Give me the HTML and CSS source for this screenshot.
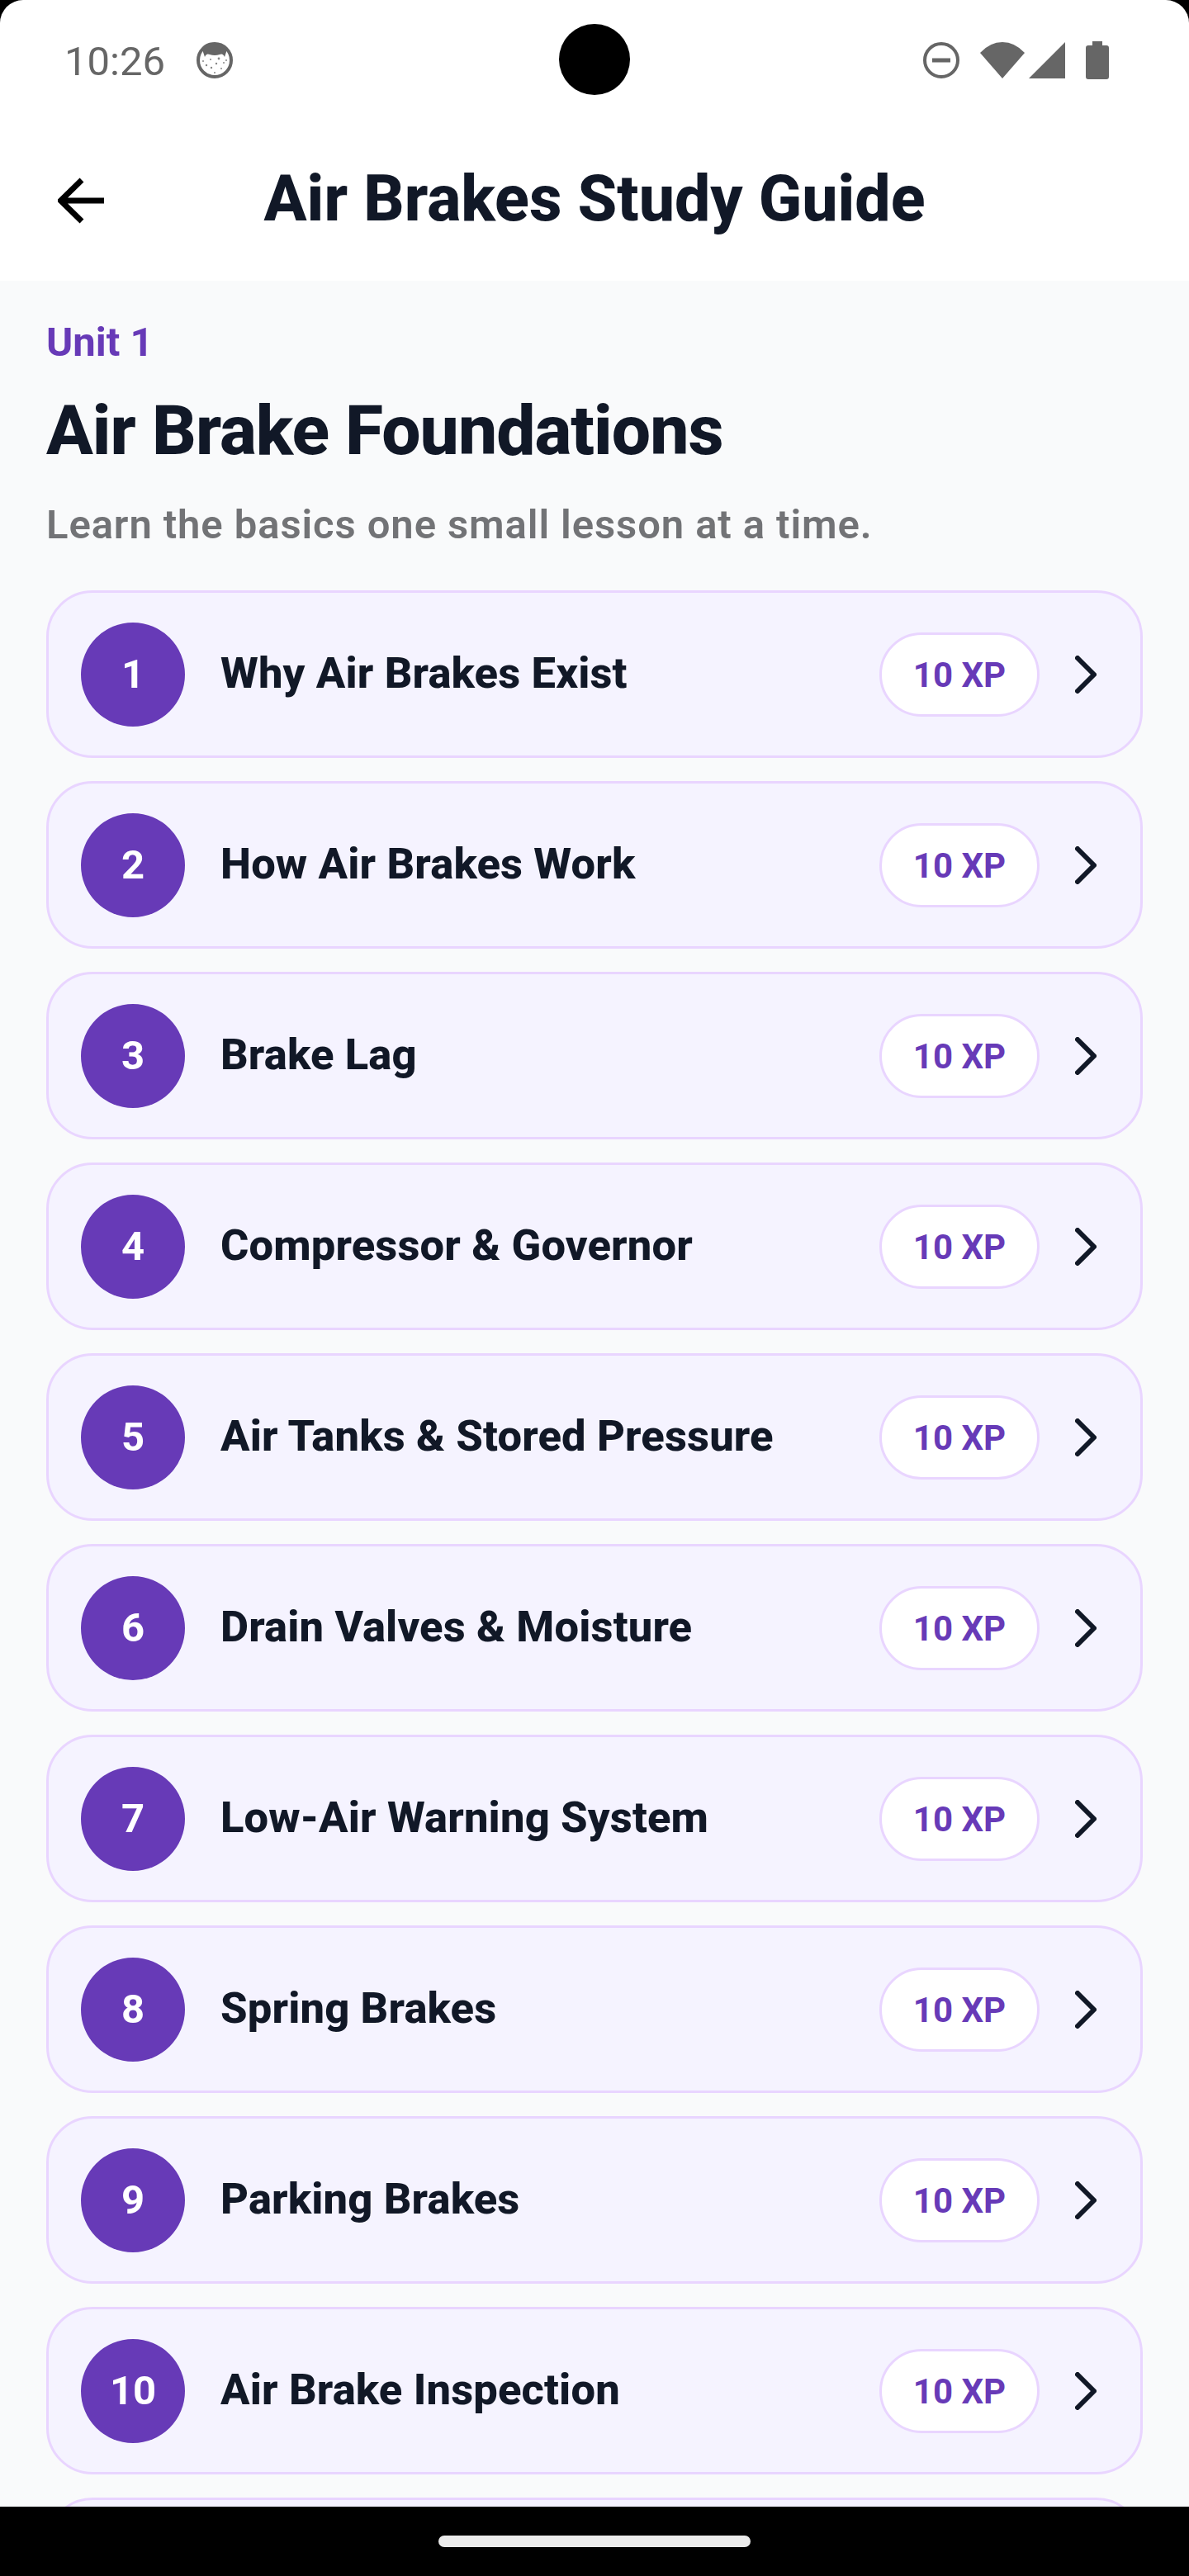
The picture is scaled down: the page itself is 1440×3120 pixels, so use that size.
FILE: index.html
```html
<!DOCTYPE html>
<html lang="en">
<head>
    <meta charset="UTF-8">
    <meta name="viewport" content="width=device-width, initial-scale=1.0">
    <title>Air Brakes Study Guide</title>
    <link rel="stylesheet" href="styles.css">
</head>
<body>
    <div class="screen">
        <div class="camera"></div>

        <div class="status-bar">
            <span class="time">10:26</span>
            <svg class="status-app" width="44" height="44" viewBox="0 0 44 44">
                <circle cx="22" cy="22" r="20" fill="#fff" stroke="#666" stroke-width="4"/>
                <path d="M7 9 L10 18 Q12 13 16 15 Q22 17 28 15 Q32 13 34 18 L37 9 A20 20 0 0 0 7 9 Z" fill="#666"/>
                <g fill="#888">
                    <circle cx="8" cy="23" r="1"/><circle cx="12" cy="28" r="1.2"/><circle cx="17" cy="21" r="1"/>
                    <circle cx="18" cy="31" r="1.2"/><circle cx="24" cy="26" r="1.2"/><circle cx="27" cy="20" r="1.4"/>
                    <circle cx="30" cy="32" r="1"/><circle cx="33" cy="25" r="1"/><circle cx="36" cy="22" r="1"/>
                    <circle cx="22" cy="37" r="1"/>
                </g>
            </svg>
            <svg class="icon-dnd" width="44" height="44" viewBox="0 0 44 44">
                <circle cx="22" cy="22" r="20" fill="none" stroke="#666" stroke-width="4"/>
                <rect x="11" y="19.5" width="22" height="5" fill="#666"/>
            </svg>
            <svg class="icon-wifi" width="54" height="44" viewBox="0 0 54 44">
                <path d="M27 44 L0 13 Q12 0 27 0 Q42 0 54 13 Z" fill="#666"/>
            </svg>
            <svg class="icon-signal" width="44" height="44" viewBox="0 0 44 44">
                <path d="M44 0 V44 H0 Z" fill="#666"/>
            </svg>
            <svg class="icon-battery" width="28" height="46" viewBox="0 0 28 46">
                <path d="M8 0 H20 V5 H25 Q28 5 28 8 V43 Q28 46 25 46 H3 Q0 46 0 43 V8 Q0 5 3 5 H8 Z" fill="#666"/>
            </svg>
        </div>

        <div class="top-bar">
            <div class="back-btn">
                <svg width="56" height="56" viewBox="0 0 56 56">
                    <path d="M56 28 H4 M29 3 L3.5 28 L29 53" fill="none" stroke="#000" stroke-width="7"/>
                </svg>
            </div>
            <h1>Air Brakes Study Guide</h1>
            <div></div>
        </div>

        <div class="content">
            <p class="unit-label">Unit 1</p>
            <h2>Air Brake Foundations</h2>
            <p class="unit-desc">Learn the basics one small lesson at a time.</p>

            <div class="lesson-list">
                <div class="lesson">
                    <div class="lesson-num">1</div>
                    <div class="lesson-name">Why Air Brakes Exist</div>
                    <div class="xp">10 XP</div>
                    <svg class="chevron" width="26" height="46" viewBox="0 0 26 46"><path d="M3 3 L23 23 L3 43" fill="none" stroke="#111827" stroke-width="6" stroke-linecap="round" stroke-linejoin="round"/></svg>
                </div>
                <div class="lesson">
                    <div class="lesson-num">2</div>
                    <div class="lesson-name">How Air Brakes Work</div>
                    <div class="xp">10 XP</div>
                    <svg class="chevron" width="26" height="46" viewBox="0 0 26 46"><path d="M3 3 L23 23 L3 43" fill="none" stroke="#111827" stroke-width="6" stroke-linecap="round" stroke-linejoin="round"/></svg>
                </div>
                <div class="lesson">
                    <div class="lesson-num">3</div>
                    <div class="lesson-name">Brake Lag</div>
                    <div class="xp">10 XP</div>
                    <svg class="chevron" width="26" height="46" viewBox="0 0 26 46"><path d="M3 3 L23 23 L3 43" fill="none" stroke="#111827" stroke-width="6" stroke-linecap="round" stroke-linejoin="round"/></svg>
                </div>
                <div class="lesson">
                    <div class="lesson-num">4</div>
                    <div class="lesson-name">Compressor &amp; Governor</div>
                    <div class="xp">10 XP</div>
                    <svg class="chevron" width="26" height="46" viewBox="0 0 26 46"><path d="M3 3 L23 23 L3 43" fill="none" stroke="#111827" stroke-width="6" stroke-linecap="round" stroke-linejoin="round"/></svg>
                </div>
                <div class="lesson">
                    <div class="lesson-num">5</div>
                    <div class="lesson-name">Air Tanks &amp; Stored Pressure</div>
                    <div class="xp">10 XP</div>
                    <svg class="chevron" width="26" height="46" viewBox="0 0 26 46"><path d="M3 3 L23 23 L3 43" fill="none" stroke="#111827" stroke-width="6" stroke-linecap="round" stroke-linejoin="round"/></svg>
                </div>
                <div class="lesson">
                    <div class="lesson-num">6</div>
                    <div class="lesson-name">Drain Valves &amp; Moisture</div>
                    <div class="xp">10 XP</div>
                    <svg class="chevron" width="26" height="46" viewBox="0 0 26 46"><path d="M3 3 L23 23 L3 43" fill="none" stroke="#111827" stroke-width="6" stroke-linecap="round" stroke-linejoin="round"/></svg>
                </div>
                <div class="lesson">
                    <div class="lesson-num">7</div>
                    <div class="lesson-name">Low-Air Warning System</div>
                    <div class="xp">10 XP</div>
                    <svg class="chevron" width="26" height="46" viewBox="0 0 26 46"><path d="M3 3 L23 23 L3 43" fill="none" stroke="#111827" stroke-width="6" stroke-linecap="round" stroke-linejoin="round"/></svg>
                </div>
                <div class="lesson">
                    <div class="lesson-num">8</div>
                    <div class="lesson-name">Spring Brakes</div>
                    <div class="xp">10 XP</div>
                    <svg class="chevron" width="26" height="46" viewBox="0 0 26 46"><path d="M3 3 L23 23 L3 43" fill="none" stroke="#111827" stroke-width="6" stroke-linecap="round" stroke-linejoin="round"/></svg>
                </div>
                <div class="lesson">
                    <div class="lesson-num">9</div>
                    <div class="lesson-name">Parking Brakes</div>
                    <div class="xp">10 XP</div>
                    <svg class="chevron" width="26" height="46" viewBox="0 0 26 46"><path d="M3 3 L23 23 L3 43" fill="none" stroke="#111827" stroke-width="6" stroke-linecap="round" stroke-linejoin="round"/></svg>
                </div>
                <div class="lesson">
                    <div class="lesson-num">10</div>
                    <div class="lesson-name">Air Brake Inspection</div>
                    <div class="xp">10 XP</div>
                    <svg class="chevron" width="26" height="46" viewBox="0 0 26 46"><path d="M3 3 L23 23 L3 43" fill="none" stroke="#111827" stroke-width="6" stroke-linecap="round" stroke-linejoin="round"/></svg>
                </div>
                <div class="lesson"></div>
            </div>
        </div>

        <div class="nav-bar">
            <div class="nav-pill"></div>
        </div>
    </div>
</body>
</html>
```

FILE: styles.css
```css
html, body {
    margin: 0;
    padding: 0;
    height: 3120px;
    overflow: hidden;
    background-color: #000;
    font-family: Roboto, "Liberation Sans", sans-serif;
}
.screen {
    position: relative;
    height: 3120px;
    display: flex;
    flex-direction: column;
    background: #fff;
    border-radius: 28px 28px 0 0;
    overflow: hidden;
}
.camera {
    position: absolute;
    left: 677px;
    top: 29px;
    width: 86px;
    height: 86px;
    border-radius: 50%;
    background: #000;
}
.status-bar {
    height: 146px;
    flex-shrink: 0;
    display: flex;
    align-items: center;
    padding: 0 97px 0 78px;
    box-sizing: border-box;
}
.time {
    margin-top: 2px;
    font-size: 49px;
    color: #666;
    font-weight: 400;
}
.status-app {
    margin-left: 38px;
    margin-right: auto;
}
.icon-wifi {
    margin-left: 25px;
}
.icon-signal {
    margin-left: 5px;
}
.icon-battery {
    margin-left: 25px;
}
.top-bar {
    height: 194px;
    flex-shrink: 0;
    display: grid;
    grid-template-columns: 1fr auto 1fr;
    align-items: center;
}
.back-btn {
    padding-left: 70px;
    display: flex;
}
h1 {
    margin: 0 0 4px;
    font-size: 77px;
    font-weight: 800;
    color: #111827;
    line-height: 100px;
}
.content {
    flex: 1;
    min-height: 0;
    overflow: hidden;
    background: #f9fafb;
    padding: 47px 56px 0;
}
.unit-label {
    margin: 0;
    font-size: 49px;
    line-height: 56px;
    font-weight: 700;
    color: #673ab7;
}
h2 {
    margin: 29px 0 0;
    font-size: 84px;
    line-height: 100px;
    font-weight: 800;
    color: #111827;
    letter-spacing: -0.95px;
}
.unit-desc {
    margin: 34px 0 0;
    font-size: 49px;
    line-height: 60px;
    font-weight: 600;
    color: #727376;
    letter-spacing: 0.9px;
}
.lesson-list {
    margin-top: 49px;
    display: flex;
    flex-direction: column;
    gap: 28px;
}
.lesson {
    height: 203px;
    flex-shrink: 0;
    box-sizing: border-box;
    display: flex;
    align-items: center;
    padding: 0 53px 0 39px;
    background: #f5f3ff;
    border: 3px solid #e9d5ff;
    border-radius: 56px;
}
.lesson-num {
    width: 126px;
    height: 126px;
    flex-shrink: 0;
    border-radius: 50%;
    background: #673ab7;
    color: #fff;
    font-size: 49px;
    font-weight: 700;
    display: flex;
    align-items: center;
    justify-content: center;
}
.lesson-name {
    flex: 1;
    margin: 0 0 4px 43px;
    font-size: 52.5px;
    font-weight: 800;
    letter-spacing: 0.15px;
    color: #111827;
}
.xp {
    width: 194px;
    height: 102px;
    box-sizing: border-box;
    padding-top: 2px;
    display: flex;
    align-items: center;
    justify-content: center;
    background: #fff;
    border: 3px solid #e9d5ff;
    border-radius: 51px;
    font-size: 42px;
    font-weight: 700;
    color: #673ab7;
}
.chevron {
    margin-left: 43px;
}
.nav-bar {
    height: 84px;
    flex-shrink: 0;
    background: #000;
    display: flex;
    align-items: center;
    justify-content: center;
}
.nav-pill {
    width: 378px;
    height: 14px;
    border-radius: 7px;
    background: #ebebeb;
}
```
